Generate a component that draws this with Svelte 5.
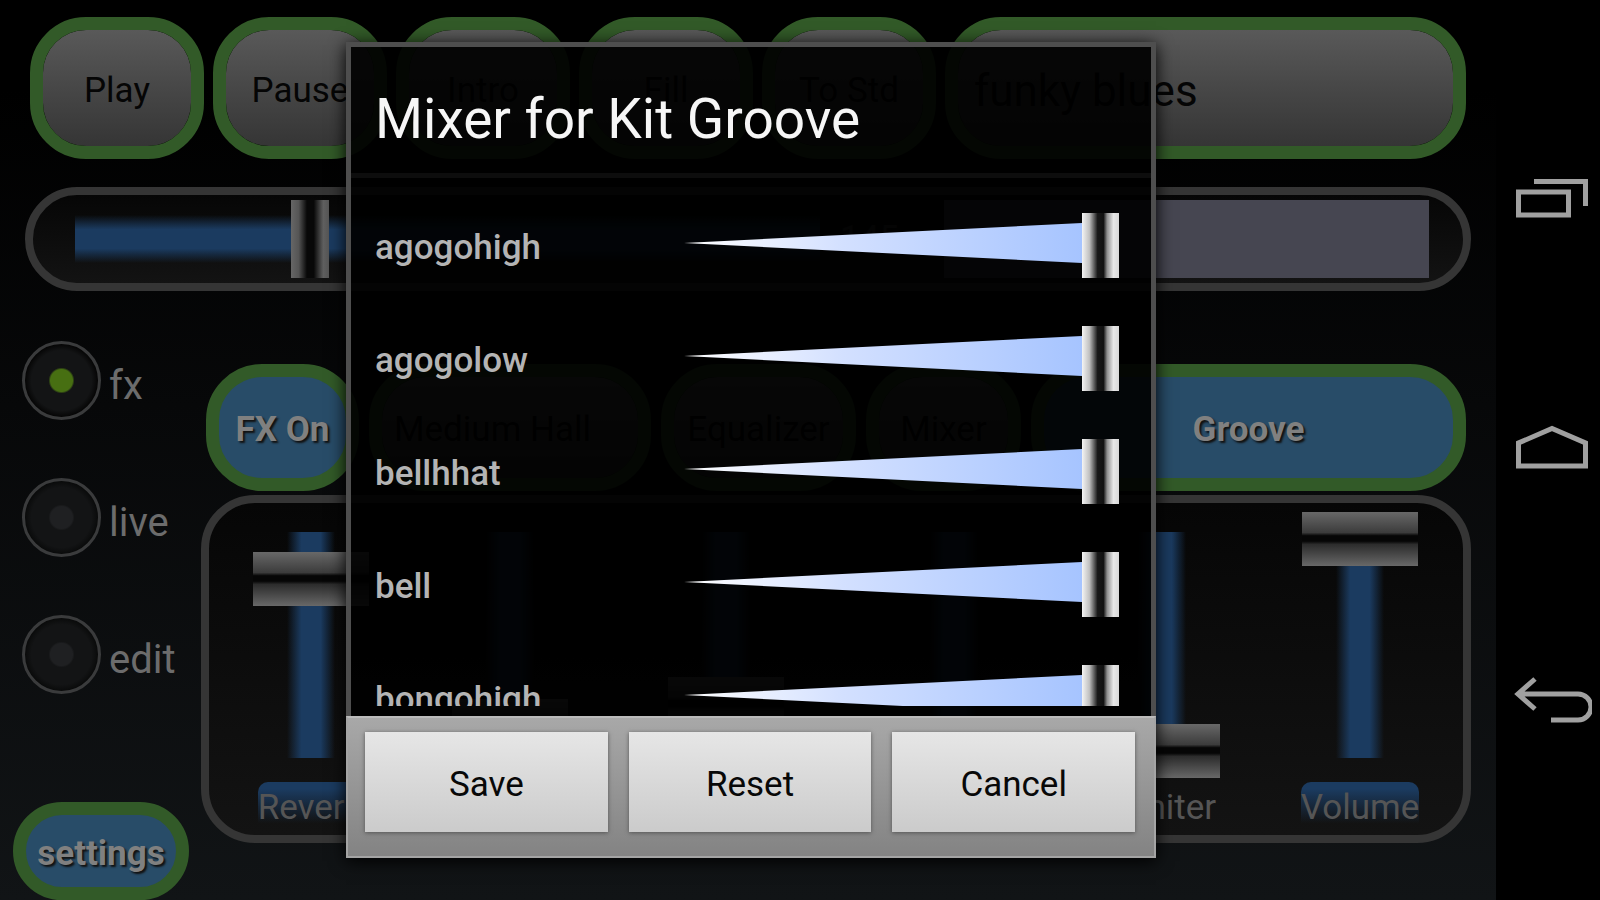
<script>
	let mode = $state('fx')
	let tempo = $state(30.5)

	const transport = ['Play', 'Pause', 'Intro', 'Fill', 'To Std']

	let faders = $state([
		{ name: 'Reverb', value: 81, on: true },
		{ value: 12 },
		{ value: 22 },
		{ value: 0 },
		{ name: 'Limiter', value: 0 },
		{ name: 'Volume', value: 100, on: true }
	])

	let channels = $state([
		{ name: 'agogohigh', level: 100 },
		{ name: 'agogolow', level: 100 },
		{ name: 'bellhhat', level: 100 },
		{ name: 'bell', level: 100 },
		{ name: 'bongohigh', level: 100 }
	])
</script>

<div class="device">
	<div class="app">
		<div class="transport">
			{#each transport as label}
				<button class="pill grey">{label}</button>
			{/each}
			<button class="pill grey song">funky blues</button>
		</div>

		<div class="tempo frame">
			<input type="range" class="h-slider" aria-label="Tempo" step="0.5" bind:value={tempo} />
			<output>145</output>
			<div class="display"></div>
		</div>

		<div class="main">
			<aside>
				<div class="modes">
					{#each ['fx', 'live', 'edit'] as name}
						<label>
							<input type="radio" name="mode" value={name} bind:group={mode} />
							<span>{name}</span>
						</label>
					{/each}
				</div>
				<button class="pill blue settings">settings</button>
			</aside>

			<section>
				<div class="effects">
					<button class="pill blue">FX On</button>
					<button class="pill grey preset">Medium Hall</button>
					<button class="pill grey">Equalizer</button>
					<button class="pill grey">Mixer</button>
					<button class="pill blue">Groove</button>
				</div>

				<div class="faders frame">
					{#each faders as fader, i}
						<label class="fader">
							<input
								type="range"
								class="v-slider"
								aria-label={fader.name ?? `Fader ${i + 1}`}
								bind:value={fader.value}
							/>
							{#if fader.name}
								<span class:on={fader.on}>{fader.name}</span>
							{/if}
						</label>
					{/each}
				</div>
			</section>
		</div>

		<div class="overlay">
			<div class="dialog" role="dialog" aria-labelledby="mixer-title">
				<div class="body">
					<h2 id="mixer-title">Mixer for Kit Groove</h2>
					<div class="channels">
						{#each channels as channel}
							<label class="channel">
								<span>{channel.name}</span>
								<div class="wedge">
									<input type="range" bind:value={channel.level} />
								</div>
							</label>
						{/each}
					</div>
				</div>
				<footer>
					<button>Save</button>
					<button>Reset</button>
					<button>Cancel</button>
				</footer>
			</div>
		</div>
	</div>

	<nav>
		<button aria-label="Recent apps">
			<svg width="84" height="60" viewBox="0 0 84 60">
				<path d="M10.500 24H60.500V47H10.500ZM26 13.500H77.500V38" />
			</svg>
		</button>
		<button aria-label="Home">
			<svg width="84" height="60" viewBox="0 0 84 60">
				<path d="M10.500 48V25L44 10.500L77.500 25V48Z" />
			</svg>
		</button>
		<button aria-label="Back">
			<svg width="84" height="60" viewBox="0 0 84 60">
				<path d="M10 25H70A13 13 0 0 1 70 51H43M27 10L10 25L27 40" />
			</svg>
		</button>
	</nav>
</div>

<style>
	:global(body) {
		background: #000;
	}
	.device {
		display: flex;
		min-height: 100vh;
		font-family: Roboto, sans-serif;
		font-size: 35px;
		line-height: 42px;
	}
	button {
		font: inherit;
		cursor: pointer;
	}
	input {
		margin: 0;
	}
	.app {
		position: relative;
		flex: 1;
		display: flex;
		flex-direction: column;
		gap: 28px;
		padding-top: 17px;
		box-sizing: border-box;
		background: linear-gradient(#000 10%, #070809 45%, #111416);
	}

	.pill {
		box-sizing: border-box;
		border: 13px solid #325a28;
		border-radius: 56px;
		padding: 5px 0 0;
		white-space: nowrap;
	}
	.grey {
		background: linear-gradient(#595959, #353535) padding-box;
		color: #050505;
	}
	.blue {
		background: #284c68;
		color: #808080;
		font-weight: 700;
		text-shadow: 2px 2px 2px #111;
	}
	.frame {
		box-sizing: border-box;
		border: 8px solid #353535;
		background: linear-gradient(#060606, #131313);
	}

	.transport {
		display: grid;
		grid-template-columns: repeat(5, 174px) 1fr;
		gap: 9px;
		padding: 0 30px;
	}
	.transport .pill {
		height: 142px;
	}
	.transport .song {
		padding-left: 16px;
		text-align: left;
		font-size: 44px;
	}

	.tempo {
		display: flex;
		align-items: center;
		gap: 20px;
		height: 104px;
		margin: 0 25px;
		padding: 0 34px 0 42px;
		border-radius: 52px;
	}
	.tempo output {
		width: 84px;
		color: #333;
	}
	.display {
		width: 485px;
		height: 78px;
		background: #464651;
	}
	.h-slider {
		flex: 1;
		min-width: 0;
		height: 78px;
		appearance: none;
		background: linear-gradient(#1b3b6000, #1b3b60 30%, #1b3b60 70%, #1b3b6000) center / 100% 48px
			no-repeat;
	}
	.h-slider::-webkit-slider-thumb {
		appearance: none;
		width: 38px;
		height: 78px;
		background: linear-gradient(90deg, #666, #555 20%, #080808 42%, #080808 60%, #606060 85%, #555);
	}

	.main {
		flex: 1;
		display: flex;
		margin-top: 22px;
	}
	aside {
		box-sizing: border-box;
		width: 201px;
		display: flex;
		flex-direction: column;
		justify-content: space-between;
	}
	.modes {
		display: flex;
		flex-direction: column;
		gap: 58px;
		padding-left: 22px;
	}
	.modes label {
		display: flex;
		align-items: center;
		gap: 8px;
		font-size: 40px;
		color: #6c6c6c;
	}
	.modes span {
		padding-top: 10px;
	}
	.modes input {
		box-sizing: border-box;
		width: 79px;
		height: 79px;
		appearance: none;
		border: 3px solid #3a3b3c;
		border-radius: 50%;
		background: radial-gradient(circle, #1f2022 11px, #131415 13px, #131415 30px, #0a0b0b 36px);
	}
	.modes input:checked {
		background: radial-gradient(circle, #476f12 11px, #131415 13px, #131415 30px, #060606 36px);
	}
	.settings {
		width: 176px;
		height: 98px;
		margin-left: 13px;
	}

	section {
		flex: 1;
		display: flex;
		flex-direction: column;
		gap: 4px;
		padding: 23px 25px 0 0;
	}
	.effects {
		display: grid;
		grid-template-columns: 153px 282px 195px 155px 1fr;
		gap: 10px;
		padding: 0 5px;
	}
	.effects .pill {
		height: 127px;
	}
	.effects .preset {
		padding-left: 12px;
		text-align: left;
	}
	.faders {
		display: grid;
		grid-template-columns: 204fr 194fr 238fr 218fr 198fr 198fr;
		height: 348px;
		padding: 9px 4px 0 0;
		border-radius: 54px;
	}
	.fader {
		display: flex;
		flex-direction: column;
		align-items: center;
		gap: 4px;
		color: #555;
	}
	.fader span {
		padding-top: 6px;
		line-height: 40px;
		border-radius: 10px 10px 0 0;
	}
	.fader .on {
		background: linear-gradient(#1b3b60 15%, #1b3b6000 90%);
	}
	.v-slider {
		width: 116px;
		height: 266px;
		appearance: none;
		writing-mode: vertical-lr;
		direction: rtl;
		background: linear-gradient(90deg, #1b3b6000, #1b3b60 30%, #1b3b60 70%, #1b3b6000) center / 48px
			226px no-repeat;
	}
	.v-slider::-webkit-slider-thumb {
		appearance: none;
		width: 116px;
		height: 54px;
		background: linear-gradient(#686868, #3c3c3c 38%, #060606 44%, #060606 54%, #2c2c2c 60%, #686868);
	}

	.overlay {
		position: absolute;
		inset: 0;
		display: flex;
		padding: 42px 340px 42px 346px;
	}
	.dialog {
		flex: 1;
		min-width: 0;
		display: flex;
		flex-direction: column;
		box-shadow: 0 3px 16px #000;
	}
	.body {
		flex: 1;
		min-height: 0;
		display: flex;
		flex-direction: column;
		padding-bottom: 10px;
		border: 5px solid #4e4e4e;
		border-bottom: 0;
		background: rgba(0, 0, 0, 0.92);
	}
	h2 {
		margin: 0;
		padding: 40px 24px 22px;
		border-bottom: 5px solid #0d0d0d;
		font-size: 55px;
		line-height: 64px;
		font-weight: 400;
		color: #f6f6f6;
	}
	.channels {
		flex: 1 1 0;
		min-height: 0;
		overflow: hidden;
		padding: 11px 32px 0 24px;
	}
	.channel {
		display: flex;
		align-items: center;
		justify-content: space-between;
		height: 113px;
		font-weight: 500;
		color: #b4b4b4;
	}
	.channel span {
		padding-top: 4px;
	}
	.wedge {
		position: relative;
		width: 435px;
		height: 65px;
	}
	.wedge::before {
		content: '';
		position: absolute;
		inset: 10px 37px 15px 0;
		background: linear-gradient(90deg, #fff, #d3e0ff 40%, #a6c4ff);
		clip-path: polygon(0 50%, 100% 0, 100% 100%);
	}
	.wedge input {
		position: relative;
		display: block;
		width: 100%;
		height: 100%;
		appearance: none;
		background: none;
	}
	.wedge input::-webkit-slider-thumb {
		appearance: none;
		width: 37px;
		height: 65px;
		background: linear-gradient(
			90deg,
			#f4f4f4,
			#c0c0c0 20%,
			#181818 42%,
			#111 58%,
			#909090 68%,
			#e8e8e8 85%,
			#d8d8d8
		);
	}

	footer {
		display: grid;
		grid-template-columns: repeat(3, 1fr);
		gap: 21px;
		padding: 14px 19px 24px 17px;
		border: 2px solid #a4a4a4;
		border-top-color: #bbb;
		background: linear-gradient(#a8a8a8, #838383);
	}
	footer button {
		height: 100px;
		padding: 5px 0 0;
		border: 0;
		background: linear-gradient(#e6e6e6, #cbcbcb);
		box-shadow: 0 1px 4px #555;
		color: #080808;
	}

	nav {
		width: 104px;
		box-sizing: border-box;
		display: flex;
		flex-direction: column;
		padding: 73px 0 76px;
		background: #000;
	}
	nav button {
		flex: 1;
		display: flex;
		align-items: center;
		justify-content: center;
		padding: 0 0 0 4px;
		border: 0;
		background: none;
	}
	nav path {
		fill: none;
		stroke: #a0a0a0;
		stroke-width: 5;
	}
</style>
